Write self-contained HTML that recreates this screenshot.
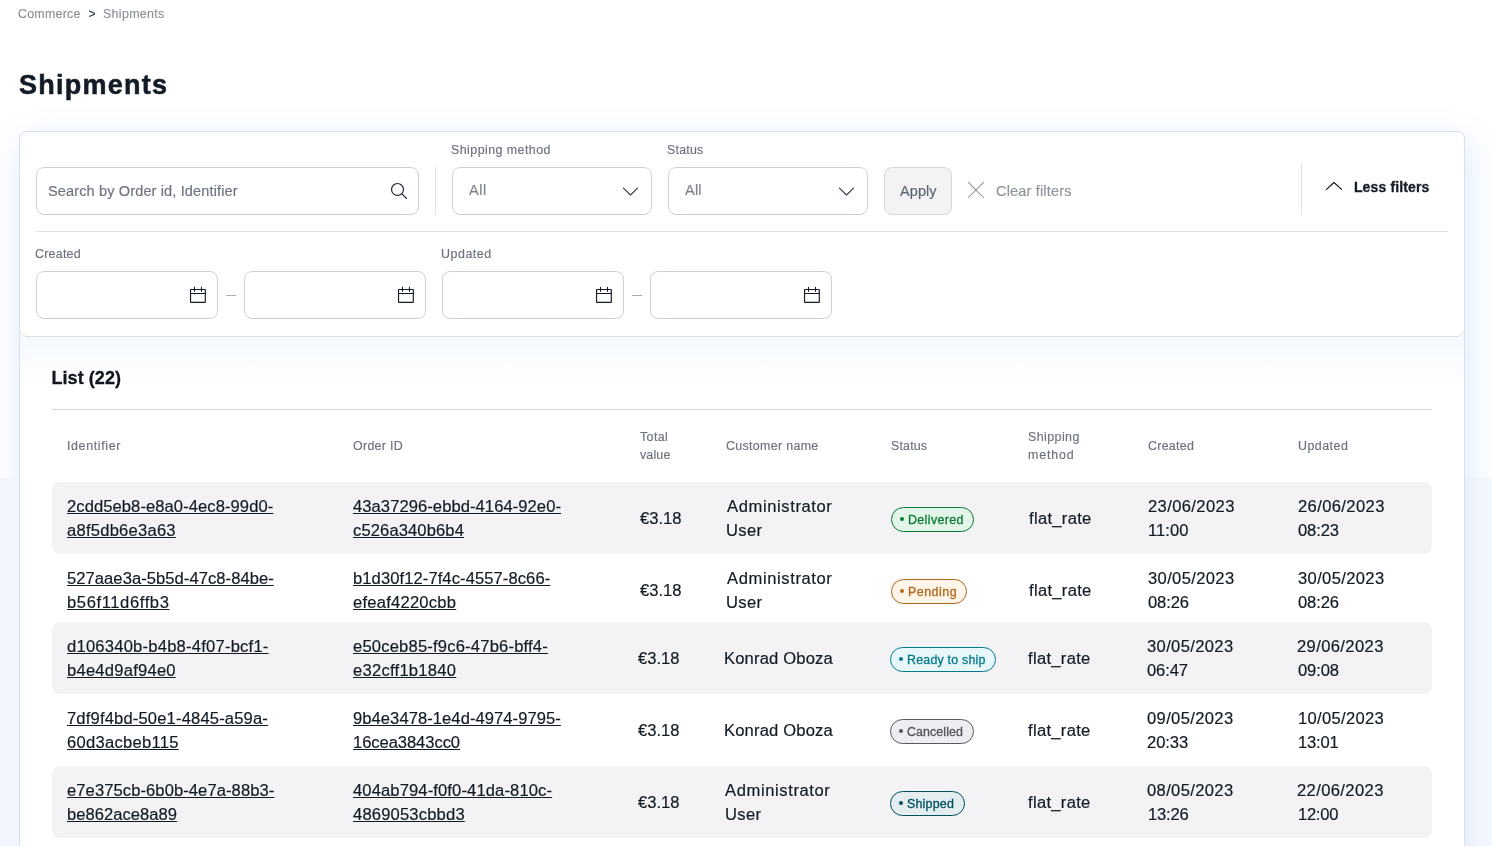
<!DOCTYPE html>
<html lang="en">
<head>
<meta charset="utf-8">
<title>Shipments</title>
<style>
*{box-sizing:border-box;margin:0;padding:0}
html,body{width:1492px;height:846px;overflow:hidden}
body{font-family:"Liberation Sans",sans-serif;background:#ffffff;position:relative;color:#131c26}
#app{position:absolute;left:0;top:0;width:1492px;height:846px;overflow:hidden;will-change:transform}
.pagebg{position:absolute;left:0;top:478px;width:1492px;height:368px;background:#f1f6fe}
.t{position:absolute;white-space:nowrap;line-height:1;display:block;transform-origin:0 50%}
.listbox{position:absolute;left:19px;top:131px;width:1446px;height:800px;background:#fff;border:1px solid #dddee8;border-radius:8px;box-shadow:3px 10px 36px 0 rgba(0,124,246,0.155)}
.stripl{position:absolute;left:0;top:478px;width:19px;height:368px;background:#f1f6fe}
.stripr{position:absolute;left:1465px;top:478px;width:27px;height:368px;background:linear-gradient(to right,#e8f1fd,#f2f6fe 16px,#f3f7fe)}
.listgrad{position:absolute;left:20px;top:337px;width:1444px;height:50px;background:linear-gradient(rgba(0,124,246,0.038),rgba(0,124,246,0))}
.filterbox{position:absolute;left:19px;top:131px;width:1446px;height:206px;background:#fff;border:1px solid #dddee8;border-radius:8px}
.inp{position:absolute;height:48px;background:#fff;border:1px solid #cdd0d6;border-radius:8px}
.btn{position:absolute;left:884px;top:167px;width:68px;height:48px;background:#f3f3f6;border:1px solid #d5d6db;border-radius:8px}
.vl{position:absolute;width:1px;background:#e0e1e8}
.hl{position:absolute;height:1px;background:#e0e1e8}
.row{position:absolute;left:52px;width:1380px;background:#f3f3f6;border-radius:8px}
.bdg{position:absolute;height:25px;border:1px solid;border-radius:13px}
.bdg i{position:absolute;left:7.7px;top:8.6px;width:4px;height:4px;border-radius:50%}
svg{position:absolute;overflow:visible}
</style>
</head>
<body>
<div id="app">
<div class="pagebg"></div>
<div class="listbox"></div>
<div class="listgrad"></div>
<div class="stripl"></div>
<div class="stripr"></div>
<div class="filterbox"></div>

<!-- filter controls -->
<div class="inp" style="left:36px;top:167px;width:383px"></div>
<svg style="left:388px;top:180px" width="22" height="22" viewBox="0 0 22 22" fill="none" stroke="#1e2733" stroke-width="1.15" stroke-linecap="round"><circle cx="9.5" cy="9.45" r="5.95"/><path d="M13.8 13.7 L18.5 18.5"/></svg>
<div class="vl" style="left:435px;top:167px;height:48px"></div>
<div class="inp" style="left:452px;top:167px;width:200px"></div>
<svg style="left:623px;top:187px" width="16" height="10" viewBox="0 0 16 10" fill="none" stroke="#333e4b" stroke-width="1.15" stroke-linecap="round" stroke-linejoin="round"><path d="M0.4 1.2 L7.5 8.0 L14.6 1.2"/></svg>
<div class="inp" style="left:668px;top:167px;width:200px"></div>
<svg style="left:839px;top:187px" width="16" height="10" viewBox="0 0 16 10" fill="none" stroke="#333e4b" stroke-width="1.15" stroke-linecap="round" stroke-linejoin="round"><path d="M0.4 1.2 L7.5 8.0 L14.6 1.2"/></svg>
<div class="btn"></div>
<svg style="left:968px;top:182px" width="16" height="16" viewBox="0 0 16 16" fill="none" stroke="#8a8e95" stroke-width="1.05" stroke-linecap="round"><path d="M0.4 0.4 L15.5 15.5 M15.5 0.4 L0.4 15.5"/></svg>
<div class="vl" style="left:1301px;top:163px;height:52px"></div>
<svg style="left:1326px;top:181px" width="17" height="10" viewBox="0 0 17 10" fill="none" stroke="#131c26" stroke-width="1.25" stroke-linecap="round" stroke-linejoin="round"><path d="M0.5 8.4 L8.0 1.5 L15.6 8.4"/></svg>
<div class="hl" style="left:36px;top:231px;width:1412px"></div>

<!-- date inputs -->
<div class="inp" style="left:36px;top:271px;width:182px"></div>
<div class="inp" style="left:244px;top:271px;width:182px"></div>
<div class="inp" style="left:442px;top:271px;width:182px"></div>
<div class="inp" style="left:650px;top:271px;width:182px"></div>
<div class="hl" style="left:226px;top:295px;width:10px;background:#a9adb5"></div>
<div class="hl" style="left:632px;top:295px;width:10px;background:#a9adb5"></div>
<svg style="left:190px;top:287px" width="16" height="16" viewBox="0 0 16 16" fill="none" stroke="#131c26" stroke-width="1.15" stroke-linecap="round" stroke-linejoin="round"><rect x="0.55" y="2.5" width="14.75" height="12.9" rx="0.3"/><path d="M0.55 6.5 H15.3 M4.5 0.4 V4.2 M11.5 0.4 V4.2"/></svg>
<svg style="left:398px;top:287px" width="16" height="16" viewBox="0 0 16 16" fill="none" stroke="#131c26" stroke-width="1.15" stroke-linecap="round" stroke-linejoin="round"><rect x="0.55" y="2.5" width="14.75" height="12.9" rx="0.3"/><path d="M0.55 6.5 H15.3 M4.5 0.4 V4.2 M11.5 0.4 V4.2"/></svg>
<svg style="left:596px;top:287px" width="16" height="16" viewBox="0 0 16 16" fill="none" stroke="#131c26" stroke-width="1.15" stroke-linecap="round" stroke-linejoin="round"><rect x="0.55" y="2.5" width="14.75" height="12.9" rx="0.3"/><path d="M0.55 6.5 H15.3 M4.5 0.4 V4.2 M11.5 0.4 V4.2"/></svg>
<svg style="left:804px;top:287px" width="16" height="16" viewBox="0 0 16 16" fill="none" stroke="#131c26" stroke-width="1.15" stroke-linecap="round" stroke-linejoin="round"><rect x="0.55" y="2.5" width="14.75" height="12.9" rx="0.3"/><path d="M0.55 6.5 H15.3 M4.5 0.4 V4.2 M11.5 0.4 V4.2"/></svg>


<!-- list -->
<div class="hl" style="left:52px;top:409px;width:1380px;background:#d3d4da"></div>
<div class="row" style="top:482px;height:72px"></div>
<div class="row" style="top:622px;height:72px"></div>
<div class="row" style="top:766px;height:72px"></div>
<div class="bdg" style="left:891.0px;top:507.2px;width:83.0px;border-color:#0a7a35;background:#e3f5e9"><i style="background:#0a7a35"></i></div>
<div class="bdg" style="left:891.0px;top:579.2px;width:76.2px;border-color:#a9661c;background:#fff5e9"><i style="background:#b0691d"></i></div>
<div class="bdg" style="left:890.0px;top:647.2px;width:106.2px;border-color:#047a8c;background:#e8f7fc"><i style="background:#067a8b"></i></div>
<div class="bdg" style="left:890.0px;top:719.2px;width:83.9px;border-color:#5a5a61;background:#ededf2"><i style="background:#55555d"></i></div>
<div class="bdg" style="left:890.0px;top:791.2px;width:74.9px;border-color:#004f5e;background:#e4eef0"><i style="background:#004f5e"></i></div>
<span class="t" style="left:18.28px;top:7.84px;font-size:12px;letter-spacing:0.225px;color:#8b9199;transform:scaleX(1.035);-webkit-text-stroke:0.15px #8b9199;">Commerce</span>
<span class="t" style="left:88.45px;top:7.84px;font-size:12px;letter-spacing:0.000px;color:#2a3442;-webkit-text-stroke:0.15px #2a3442;">&gt;</span>
<span class="t" style="left:103.38px;top:7.84px;font-size:12px;letter-spacing:0.320px;color:#8b9199;transform:scaleX(1.035);-webkit-text-stroke:0.15px #8b9199;">Shipments</span>
<span class="t" style="left:18.98px;top:72.44px;font-size:27px;letter-spacing:1.262px;color:#131c26;font-weight:700;-webkit-text-stroke:0.55px #131c26;">Shipments</span>
<span class="t" style="left:48.15px;top:183.65px;font-size:14px;letter-spacing:0.146px;color:#6c7480;transform:scaleX(1.035);-webkit-text-stroke:0.18px #6c7480;">Search by Order id, Identifier</span>
<span class="t" style="left:451.28px;top:144.04px;font-size:12px;letter-spacing:0.431px;color:#6a717d;transform:scaleX(1.035);-webkit-text-stroke:0.15px #6a717d;">Shipping method</span>
<span class="t" style="left:667.28px;top:144.04px;font-size:12px;letter-spacing:0.217px;color:#6a717d;transform:scaleX(1.035);-webkit-text-stroke:0.15px #6a717d;">Status</span>
<span class="t" style="left:468.60px;top:183.45px;font-size:14px;letter-spacing:0.557px;color:#7d838c;transform:scaleX(1.035);-webkit-text-stroke:0.18px #7d838c;">All</span>
<span class="t" style="left:685.20px;top:183.45px;font-size:14px;letter-spacing:0.218px;color:#7d838c;transform:scaleX(1.035);-webkit-text-stroke:0.18px #7d838c;">All</span>
<span class="t" style="left:899.80px;top:183.65px;font-size:14px;letter-spacing:0.085px;color:#5d6673;transform:scaleX(1.035);-webkit-text-stroke:0.18px #5d6673;">Apply</span>
<span class="t" style="left:996.22px;top:183.65px;font-size:14px;letter-spacing:0.174px;color:#8e949c;transform:scaleX(1.035);-webkit-text-stroke:0.18px #8e949c;">Clear filters</span>
<span class="t" style="left:1353.92px;top:180.35px;font-size:14px;letter-spacing:0.138px;color:#131c26;font-weight:700;-webkit-text-stroke:0.3px #131c26;">Less filters</span>
<span class="t" style="left:34.98px;top:248.14px;font-size:12px;letter-spacing:0.239px;color:#6a717d;transform:scaleX(1.035);-webkit-text-stroke:0.15px #6a717d;">Created</span>
<span class="t" style="left:440.57px;top:248.14px;font-size:12px;letter-spacing:0.519px;color:#6a717d;transform:scaleX(1.035);-webkit-text-stroke:0.15px #6a717d;">Updated</span>
<span class="t" style="left:51.48px;top:369.26px;font-size:18px;letter-spacing:0.058px;color:#10151c;font-weight:700;-webkit-text-stroke:0.3px #10151c;">List (22)</span>
<span class="t" style="left:66.86px;top:440.14px;font-size:12px;letter-spacing:0.612px;color:#6a717d;transform:scaleX(1.035);-webkit-text-stroke:0.15px #6a717d;">Identifier</span>
<span class="t" style="left:353.03px;top:440.14px;font-size:12px;letter-spacing:0.295px;color:#6a717d;transform:scaleX(1.035);-webkit-text-stroke:0.15px #6a717d;">Order ID</span>
<span class="t" style="left:639.54px;top:431.04px;font-size:12px;letter-spacing:0.391px;color:#6a717d;transform:scaleX(1.035);-webkit-text-stroke:0.15px #6a717d;">Total</span>
<span class="t" style="left:639.80px;top:449.04px;font-size:12px;letter-spacing:0.157px;color:#6a717d;transform:scaleX(1.035);-webkit-text-stroke:0.15px #6a717d;">value</span>
<span class="t" style="left:726.48px;top:440.14px;font-size:12px;letter-spacing:0.315px;color:#6a717d;transform:scaleX(1.035);-webkit-text-stroke:0.15px #6a717d;">Customer name</span>
<span class="t" style="left:891.18px;top:440.14px;font-size:12px;letter-spacing:0.159px;color:#6a717d;transform:scaleX(1.035);-webkit-text-stroke:0.15px #6a717d;">Status</span>
<span class="t" style="left:1028.38px;top:431.04px;font-size:12px;letter-spacing:0.418px;color:#6a717d;transform:scaleX(1.035);-webkit-text-stroke:0.15px #6a717d;">Shipping</span>
<span class="t" style="left:1028.12px;top:449.04px;font-size:12px;letter-spacing:0.811px;color:#6a717d;transform:scaleX(1.035);-webkit-text-stroke:0.15px #6a717d;">method</span>
<span class="t" style="left:1147.78px;top:440.14px;font-size:12px;letter-spacing:0.271px;color:#6a717d;transform:scaleX(1.035);-webkit-text-stroke:0.15px #6a717d;">Created</span>
<span class="t" style="left:1297.57px;top:440.14px;font-size:12px;letter-spacing:0.455px;color:#6a717d;transform:scaleX(1.035);-webkit-text-stroke:0.15px #6a717d;">Updated</span>
<span class="t" style="left:66.90px;top:498.86px;font-size:16px;letter-spacing:0.077px;color:#131c26;transform:scaleX(1.035);-webkit-text-stroke:0.20px #131c26;text-decoration:underline;text-decoration-thickness:1px;text-underline-offset:1px;">2cdd5eb8-e8a0-4ec8-99d0-</span>
<span class="t" style="left:66.90px;top:523.46px;font-size:16px;letter-spacing:0.233px;color:#131c26;transform:scaleX(1.035);-webkit-text-stroke:0.20px #131c26;text-decoration:underline;text-decoration-thickness:1px;text-underline-offset:1px;">a8f5db6e3a63</span>
<span class="t" style="left:352.70px;top:498.86px;font-size:16px;letter-spacing:0.070px;color:#131c26;transform:scaleX(1.035);-webkit-text-stroke:0.20px #131c26;text-decoration:underline;text-decoration-thickness:1px;text-underline-offset:1px;">43a37296-ebbd-4164-92e0-</span>
<span class="t" style="left:352.70px;top:523.46px;font-size:16px;letter-spacing:0.114px;color:#131c26;transform:scaleX(1.035);-webkit-text-stroke:0.20px #131c26;text-decoration:underline;text-decoration-thickness:1px;text-underline-offset:1px;">c526a340b6b4</span>
<span class="t" style="left:639.50px;top:510.76px;font-size:16px;letter-spacing:-0.017px;color:#131c26;transform:scaleX(1.035);-webkit-text-stroke:0.20px #131c26;">€3.18</span>
<span class="t" style="left:727.00px;top:498.86px;font-size:16px;letter-spacing:0.590px;color:#131c26;transform:scaleX(1.035);-webkit-text-stroke:0.20px #131c26;">Administrator</span>
<span class="t" style="left:726.47px;top:523.46px;font-size:16px;letter-spacing:0.339px;color:#131c26;transform:scaleX(1.035);-webkit-text-stroke:0.20px #131c26;">User</span>
<span class="t" style="left:1029.20px;top:510.76px;font-size:16px;letter-spacing:0.294px;color:#131c26;transform:scaleX(1.035);-webkit-text-stroke:0.20px #131c26;">flat_rate</span>
<span class="t" style="left:1147.82px;top:498.86px;font-size:16px;letter-spacing:0.372px;color:#131c26;transform:scaleX(1.035);-webkit-text-stroke:0.20px #131c26;">23/06/2023</span>
<span class="t" style="left:1148.46px;top:523.46px;font-size:16px;letter-spacing:0.033px;color:#131c26;transform:scaleX(1.035);-webkit-text-stroke:0.20px #131c26;">11:00</span>
<span class="t" style="left:1297.92px;top:498.86px;font-size:16px;letter-spacing:0.372px;color:#131c26;transform:scaleX(1.035);-webkit-text-stroke:0.20px #131c26;">26/06/2023</span>
<span class="t" style="left:1298.18px;top:523.46px;font-size:16px;letter-spacing:-0.109px;color:#131c26;transform:scaleX(1.035);-webkit-text-stroke:0.20px #131c26;">08:23</span>
<span class="t" style="left:907.62px;top:513.84px;font-size:12px;letter-spacing:0.359px;color:#0a7a35;transform:scaleX(1.035);-webkit-text-stroke:0.3px #0a7a35;">Delivered</span>
<span class="t" style="left:66.90px;top:570.86px;font-size:16px;letter-spacing:0.059px;color:#131c26;transform:scaleX(1.035);-webkit-text-stroke:0.20px #131c26;text-decoration:underline;text-decoration-thickness:1px;text-underline-offset:1px;">527aae3a-5b5d-47c8-84be-</span>
<span class="t" style="left:66.90px;top:595.46px;font-size:16px;letter-spacing:0.591px;color:#131c26;transform:scaleX(1.035);-webkit-text-stroke:0.20px #131c26;text-decoration:underline;text-decoration-thickness:1px;text-underline-offset:1px;">b56f11d6ffb3</span>
<span class="t" style="left:352.70px;top:570.86px;font-size:16px;letter-spacing:0.085px;color:#131c26;transform:scaleX(1.035);-webkit-text-stroke:0.20px #131c26;text-decoration:underline;text-decoration-thickness:1px;text-underline-offset:1px;">b1d30f12-7f4c-4557-8c66-</span>
<span class="t" style="left:352.70px;top:595.46px;font-size:16px;letter-spacing:0.228px;color:#131c26;transform:scaleX(1.035);-webkit-text-stroke:0.20px #131c26;text-decoration:underline;text-decoration-thickness:1px;text-underline-offset:1px;">efeaf4220cbb</span>
<span class="t" style="left:639.50px;top:582.76px;font-size:16px;letter-spacing:-0.017px;color:#131c26;transform:scaleX(1.035);-webkit-text-stroke:0.20px #131c26;">€3.18</span>
<span class="t" style="left:727.00px;top:570.86px;font-size:16px;letter-spacing:0.590px;color:#131c26;transform:scaleX(1.035);-webkit-text-stroke:0.20px #131c26;">Administrator</span>
<span class="t" style="left:726.47px;top:595.46px;font-size:16px;letter-spacing:0.339px;color:#131c26;transform:scaleX(1.035);-webkit-text-stroke:0.20px #131c26;">User</span>
<span class="t" style="left:1029.20px;top:582.76px;font-size:16px;letter-spacing:0.294px;color:#131c26;transform:scaleX(1.035);-webkit-text-stroke:0.20px #131c26;">flat_rate</span>
<span class="t" style="left:1148.08px;top:570.86px;font-size:16px;letter-spacing:0.344px;color:#131c26;transform:scaleX(1.035);-webkit-text-stroke:0.20px #131c26;">30/05/2023</span>
<span class="t" style="left:1148.08px;top:595.46px;font-size:16px;letter-spacing:-0.109px;color:#131c26;transform:scaleX(1.035);-webkit-text-stroke:0.20px #131c26;">08:26</span>
<span class="t" style="left:1298.18px;top:570.86px;font-size:16px;letter-spacing:0.344px;color:#131c26;transform:scaleX(1.035);-webkit-text-stroke:0.20px #131c26;">30/05/2023</span>
<span class="t" style="left:1298.18px;top:595.46px;font-size:16px;letter-spacing:-0.109px;color:#131c26;transform:scaleX(1.035);-webkit-text-stroke:0.20px #131c26;">08:26</span>
<span class="t" style="left:907.62px;top:585.84px;font-size:12px;letter-spacing:0.491px;color:#b0691d;transform:scaleX(1.035);-webkit-text-stroke:0.3px #b0691d;">Pending</span>
<span class="t" style="left:66.90px;top:638.86px;font-size:16px;letter-spacing:0.221px;color:#131c26;transform:scaleX(1.035);-webkit-text-stroke:0.20px #131c26;text-decoration:underline;text-decoration-thickness:1px;text-underline-offset:1px;">d106340b-b4b8-4f07-bcf1-</span>
<span class="t" style="left:66.90px;top:663.46px;font-size:16px;letter-spacing:0.233px;color:#131c26;transform:scaleX(1.035);-webkit-text-stroke:0.20px #131c26;text-decoration:underline;text-decoration-thickness:1px;text-underline-offset:1px;">b4e4d9af94e0</span>
<span class="t" style="left:352.70px;top:638.86px;font-size:16px;letter-spacing:0.190px;color:#131c26;transform:scaleX(1.035);-webkit-text-stroke:0.20px #131c26;text-decoration:underline;text-decoration-thickness:1px;text-underline-offset:1px;">e50ceb85-f9c6-47b6-bff4-</span>
<span class="t" style="left:352.70px;top:663.46px;font-size:16px;letter-spacing:0.252px;color:#131c26;transform:scaleX(1.035);-webkit-text-stroke:0.20px #131c26;text-decoration:underline;text-decoration-thickness:1px;text-underline-offset:1px;">e32cff1b1840</span>
<span class="t" style="left:637.80px;top:650.76px;font-size:16px;letter-spacing:-0.017px;color:#131c26;transform:scaleX(1.035);-webkit-text-stroke:0.20px #131c26;">€3.18</span>
<span class="t" style="left:724.01px;top:650.76px;font-size:16px;letter-spacing:0.167px;color:#131c26;transform:scaleX(1.035);-webkit-text-stroke:0.20px #131c26;">Konrad Oboza</span>
<span class="t" style="left:1027.50px;top:650.76px;font-size:16px;letter-spacing:0.294px;color:#131c26;transform:scaleX(1.035);-webkit-text-stroke:0.20px #131c26;">flat_rate</span>
<span class="t" style="left:1147.40px;top:638.86px;font-size:16px;letter-spacing:0.344px;color:#131c26;transform:scaleX(1.035);-webkit-text-stroke:0.20px #131c26;">30/05/2023</span>
<span class="t" style="left:1147.40px;top:663.46px;font-size:16px;letter-spacing:-0.109px;color:#131c26;transform:scaleX(1.035);-webkit-text-stroke:0.20px #131c26;">06:47</span>
<span class="t" style="left:1297.24px;top:638.86px;font-size:16px;letter-spacing:0.372px;color:#131c26;transform:scaleX(1.035);-webkit-text-stroke:0.20px #131c26;">29/06/2023</span>
<span class="t" style="left:1297.50px;top:663.46px;font-size:16px;letter-spacing:-0.109px;color:#131c26;transform:scaleX(1.035);-webkit-text-stroke:0.20px #131c26;">09:08</span>
<span class="t" style="left:906.60px;top:653.84px;font-size:12px;letter-spacing:0.196px;color:#067a8b;transform:scaleX(1.035);-webkit-text-stroke:0.3px #067a8b;">Ready to ship</span>
<span class="t" style="left:66.90px;top:710.86px;font-size:16px;letter-spacing:0.159px;color:#131c26;transform:scaleX(1.035);-webkit-text-stroke:0.20px #131c26;text-decoration:underline;text-decoration-thickness:1px;text-underline-offset:1px;">7df9f4bd-50e1-4845-a59a-</span>
<span class="t" style="left:66.90px;top:735.46px;font-size:16px;letter-spacing:0.269px;color:#131c26;transform:scaleX(1.035);-webkit-text-stroke:0.20px #131c26;text-decoration:underline;text-decoration-thickness:1px;text-underline-offset:1px;">60d3acbeb115</span>
<span class="t" style="left:352.70px;top:710.86px;font-size:16px;letter-spacing:0.066px;color:#131c26;transform:scaleX(1.035);-webkit-text-stroke:0.20px #131c26;text-decoration:underline;text-decoration-thickness:1px;text-underline-offset:1px;">9b4e3478-1e4d-4974-9795-</span>
<span class="t" style="left:352.70px;top:735.46px;font-size:16px;letter-spacing:-0.059px;color:#131c26;transform:scaleX(1.035);-webkit-text-stroke:0.20px #131c26;text-decoration:underline;text-decoration-thickness:1px;text-underline-offset:1px;">16cea3843cc0</span>
<span class="t" style="left:637.80px;top:722.76px;font-size:16px;letter-spacing:-0.017px;color:#131c26;transform:scaleX(1.035);-webkit-text-stroke:0.20px #131c26;">€3.18</span>
<span class="t" style="left:724.01px;top:722.76px;font-size:16px;letter-spacing:0.167px;color:#131c26;transform:scaleX(1.035);-webkit-text-stroke:0.20px #131c26;">Konrad Oboza</span>
<span class="t" style="left:1027.50px;top:722.76px;font-size:16px;letter-spacing:0.294px;color:#131c26;transform:scaleX(1.035);-webkit-text-stroke:0.20px #131c26;">flat_rate</span>
<span class="t" style="left:1147.40px;top:710.86px;font-size:16px;letter-spacing:0.344px;color:#131c26;transform:scaleX(1.035);-webkit-text-stroke:0.20px #131c26;">09/05/2023</span>
<span class="t" style="left:1147.14px;top:735.46px;font-size:16px;letter-spacing:-0.047px;color:#131c26;transform:scaleX(1.035);-webkit-text-stroke:0.20px #131c26;">20:33</span>
<span class="t" style="left:1297.88px;top:710.86px;font-size:16px;letter-spacing:0.303px;color:#131c26;transform:scaleX(1.035);-webkit-text-stroke:0.20px #131c26;">10/05/2023</span>
<span class="t" style="left:1297.88px;top:735.46px;font-size:16px;letter-spacing:-0.202px;color:#131c26;transform:scaleX(1.035);-webkit-text-stroke:0.20px #131c26;">13:01</span>
<span class="t" style="left:906.96px;top:725.84px;font-size:12px;letter-spacing:0.089px;color:#55555d;transform:scaleX(1.035);-webkit-text-stroke:0.3px #55555d;">Cancelled</span>
<span class="t" style="left:66.90px;top:782.86px;font-size:16px;letter-spacing:0.083px;color:#131c26;transform:scaleX(1.035);-webkit-text-stroke:0.20px #131c26;text-decoration:underline;text-decoration-thickness:1px;text-underline-offset:1px;">e7e375cb-6b0b-4e7a-88b3-</span>
<span class="t" style="left:66.90px;top:807.46px;font-size:16px;letter-spacing:0.041px;color:#131c26;transform:scaleX(1.035);-webkit-text-stroke:0.20px #131c26;text-decoration:underline;text-decoration-thickness:1px;text-underline-offset:1px;">be862ace8a89</span>
<span class="t" style="left:352.70px;top:782.86px;font-size:16px;letter-spacing:0.120px;color:#131c26;transform:scaleX(1.035);-webkit-text-stroke:0.20px #131c26;text-decoration:underline;text-decoration-thickness:1px;text-underline-offset:1px;">404ab794-f0f0-41da-810c-</span>
<span class="t" style="left:352.70px;top:807.46px;font-size:16px;letter-spacing:0.178px;color:#131c26;transform:scaleX(1.035);-webkit-text-stroke:0.20px #131c26;text-decoration:underline;text-decoration-thickness:1px;text-underline-offset:1px;">4869053cbbd3</span>
<span class="t" style="left:637.80px;top:794.76px;font-size:16px;letter-spacing:-0.017px;color:#131c26;transform:scaleX(1.035);-webkit-text-stroke:0.20px #131c26;">€3.18</span>
<span class="t" style="left:725.30px;top:782.86px;font-size:16px;letter-spacing:0.590px;color:#131c26;transform:scaleX(1.035);-webkit-text-stroke:0.20px #131c26;">Administrator</span>
<span class="t" style="left:724.76px;top:807.46px;font-size:16px;letter-spacing:0.339px;color:#131c26;transform:scaleX(1.035);-webkit-text-stroke:0.20px #131c26;">User</span>
<span class="t" style="left:1027.50px;top:794.76px;font-size:16px;letter-spacing:0.294px;color:#131c26;transform:scaleX(1.035);-webkit-text-stroke:0.20px #131c26;">flat_rate</span>
<span class="t" style="left:1147.40px;top:782.86px;font-size:16px;letter-spacing:0.344px;color:#131c26;transform:scaleX(1.035);-webkit-text-stroke:0.20px #131c26;">08/05/2023</span>
<span class="t" style="left:1147.78px;top:807.46px;font-size:16px;letter-spacing:-0.202px;color:#131c26;transform:scaleX(1.035);-webkit-text-stroke:0.20px #131c26;">13:26</span>
<span class="t" style="left:1297.24px;top:782.86px;font-size:16px;letter-spacing:0.372px;color:#131c26;transform:scaleX(1.035);-webkit-text-stroke:0.20px #131c26;">22/06/2023</span>
<span class="t" style="left:1297.88px;top:807.46px;font-size:16px;letter-spacing:-0.264px;color:#131c26;transform:scaleX(1.035);-webkit-text-stroke:0.20px #131c26;">12:00</span>
<span class="t" style="left:907.06px;top:797.84px;font-size:12px;letter-spacing:0.207px;color:#004f5e;transform:scaleX(1.035);-webkit-text-stroke:0.3px #004f5e;">Shipped</span>
</div>
</body>
</html>
